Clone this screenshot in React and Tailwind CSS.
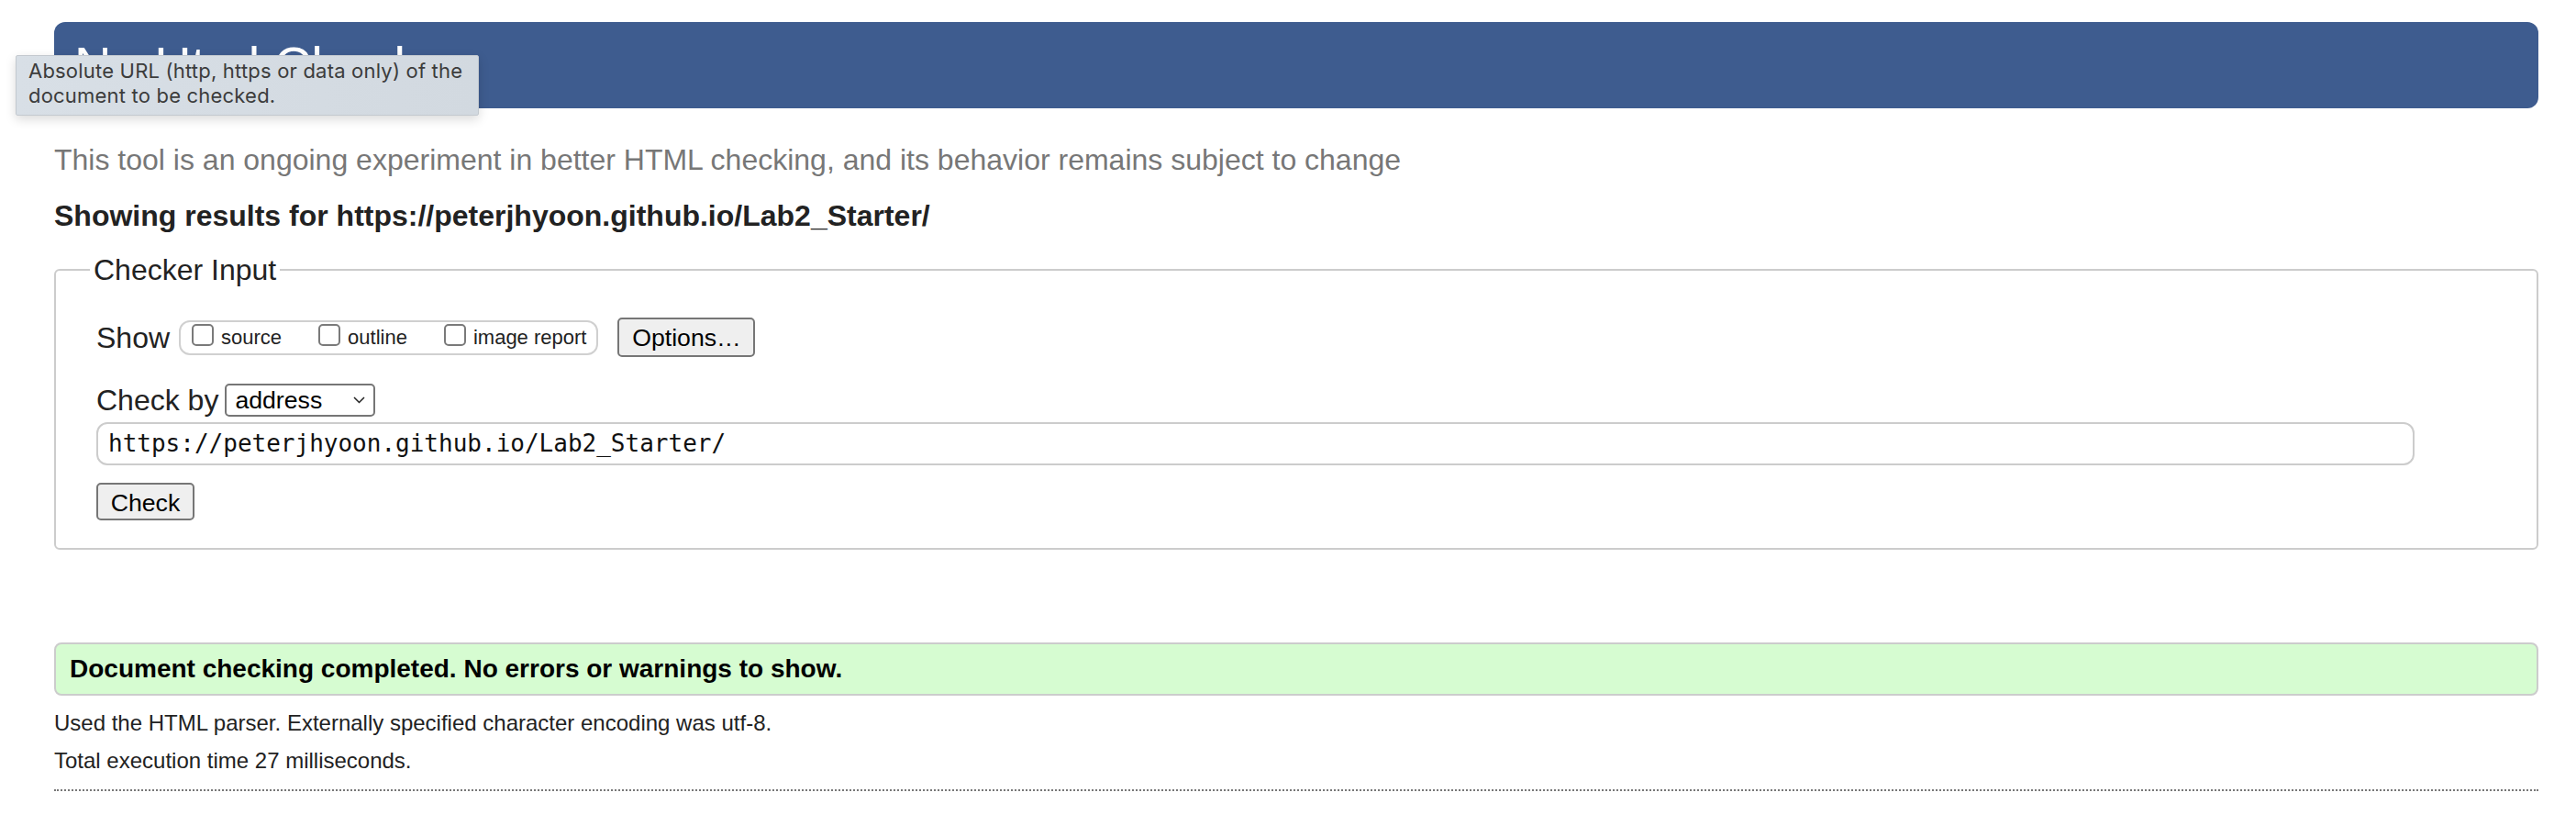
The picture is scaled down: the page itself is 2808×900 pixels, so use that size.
import React from 'react';

function Checkbox({ label }) {
  return (
    <label className="flex items-center gap-[8px]">
      <span className="w-[24px] h-[24px] mb-[6px] border-2 border-[#7a7a7a] rounded-[5px] bg-white" />
      <span className="text-[22px] leading-[26px] text-[#222]">{label}</span>
    </label>
  );
}

export default function App() {
  return (
    <div className="relative min-h-[900px] bg-white pt-[24px] pl-[59px] pr-[41px] font-['Liberation_Sans',Arial,sans-serif] text-[#222]">
      {/* tooltip over the page title */}
      <div className="absolute left-[17px] top-[60px] w-[505px] h-[66px] pl-[13px] pt-[3px] border border-[#c3c9cf] rounded-[2px] bg-gradient-to-r from-[#d8dfe6] to-[#d2d9e0] shadow-[0_4px_12px_rgba(0,0,0,0.15)] font-['Inter',sans-serif] text-[22px] tracking-[0.2px] leading-[27px] text-[#3c3c3c] z-10 whitespace-nowrap">
        <div>Absolute URL (http, https or data only) of the</div>
        <div>document to be checked.</div>
      </div>

      <h1 className="h-[94px] rounded-[12px] bg-[#3e5c8f] pl-[22px] flex items-center text-white text-[56px] leading-none font-normal">
        Nu Html Checker
      </h1>

      <p className="mt-[36px] text-[32px] leading-[40px] text-[#777]">
        This tool is an ongoing experiment in better HTML checking, and its behavior remains subject to change
      </p>

      <p className="mt-[21px] text-[32px] leading-[40px] font-bold text-[#222]">
        Showing results for https://peterjhyoon.github.io/Lab2_Starter/
      </p>

      <fieldset className="mt-[19px] border-2 border-[#cccccc] rounded-[6px] pl-[37px] pr-[40px] pb-[30px]">
        <legend className="px-[4px] text-[32px] leading-[40px] text-[#222]">Checker Input</legend>
        <div className="pl-[7px] pt-[32px]">
          <div className="flex items-center h-[43px]">
            <span className="text-[32px] leading-[40px]">Show</span>
            <div className="ml-[10px] h-[38px] flex items-center gap-[40px] border-2 border-[#d0d0d0] rounded-[12px] pl-[12px] pr-[11px]">
              <Checkbox label="source" />
              <Checkbox label="outline" />
              <Checkbox label="image report" />
            </div>
            <button className="ml-[21px] w-[150px] h-[43px] bg-[#efefef] border-2 border-[#767676] rounded-[5px] text-[26.67px] text-black">
              Options…
            </button>
          </div>

          <div className="mt-[29px] flex items-center h-[36px]">
            <span className="text-[32px] leading-[40px]">Check by</span>
            <div className="ml-[7px] w-[164px] h-[36px] border-2 border-[#767676] rounded-[5px] flex items-center justify-between pl-[9px] pr-[9px] text-[26.67px] text-black">
              <span>address</span>
              <svg width="13" height="8" viewBox="0 0 13 8" fill="none">
                <path d="M1 1 L6.5 6.5 L12 1" stroke="#222" strokeWidth="1.5" />
              </svg>
            </div>
          </div>

          <div className="mt-[6px] w-[2527px] h-[47px] border-2 border-[#cccccc] rounded-[12px] flex items-center pl-[11px] font-['DejaVu_Sans_Mono',monospace] text-[26px] text-[#111]">
            https://peterjhyoon.github.io/Lab2_Starter/
          </div>

          <button className="mt-[19px] block w-[107px] h-[41px] bg-[#efefef] border-2 border-[#767676] rounded-[5px] text-[26.67px] text-black">
            Check
          </button>
        </div>
      </fieldset>

      <div className="mt-[101px] h-[58px] border-2 border-[#cccccc] rounded-[8px] bg-[#d6fcd1] flex items-center pl-[15px] text-[28px] font-bold text-black">
        Document checking completed. No errors or warnings to show.
      </div>

      <p className="mt-[15px] text-[24px] leading-[30px] text-[#222]">
        Used the HTML parser. Externally specified character encoding was utf-8.
      </p>
      <p className="mt-[11px] text-[24px] leading-[30px] text-[#222]">
        Total execution time 27 milliseconds.
      </p>

      <div className="mt-[16px] border-t-2 border-dotted border-[#777]" />
    </div>
  );
}
